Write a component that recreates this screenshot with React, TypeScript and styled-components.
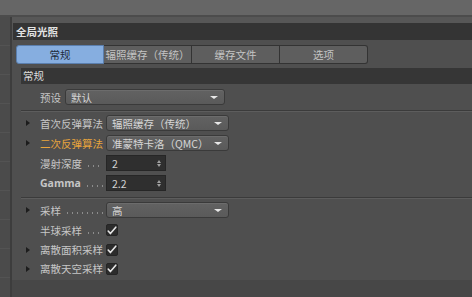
import styled, { createGlobalStyle } from "styled-components";

const GlobalStyle = createGlobalStyle`
  html, body {
    margin: 0;
    padding: 0;
    background: #4f4f4f;
    width: 472px;
    height: 297px;
    overflow: hidden;
  }
  * { box-sizing: border-box; }
`;

const Screen = styled.div`
  width: 472px;
  height: 297px;
  display: flex;
  flex-direction: column;
  font-family: "Noto Sans CJK SC", "Liberation Sans", sans-serif;
  font-size: 10.5px;
  color: #c9c9c9;
`;

const TopBar = styled.div`
  height: 17px;
  background: #666666;
  border-bottom: 2px solid #4c4c4c;
`;

const Body = styled.div`
  flex: 1;
  display: flex;
  min-height: 0;
`;

const SideStrip = styled.div`
  width: 12px;
  background: repeating-linear-gradient(
    to bottom,
    #4b4b4b 0px,
    #4b4b4b 28px,
    #535353 28px,
    #535353 29px
  );
  border-right: 2px solid #3d3d3d;
`;

const Main = styled.div`
  flex: 1;
  display: flex;
  flex-direction: column;
  background: #575757;
  padding-top: 6px;
`;

const TitleBar = styled.div`
  height: 17px;
  margin-left: 1px;
  background: #343434;
  color: #e2e2e2;
  font-weight: bold;
  line-height: 17px;
  padding-left: 3px;
`;

const Content = styled.div`
  flex: 1;
  display: flex;
  flex-direction: column;
  background: #4f4f4f;
`;

const Tabs = styled.div`
  display: flex;
  padding: 5px 0 0 4px;
  height: 28px;
`;

const Tab = styled.div<{ $active?: boolean }>`
  width: 88px;
  height: 19px;
  line-height: 18px;
  text-align: center;
  background: ${(p) => (p.$active ? "#86aee0" : "#5e5e5e")};
  color: ${(p) => (p.$active ? "#1e2a3a" : "#c4c4c4")};
  border: 1px solid ${(p) => (p.$active ? "#5b7fae" : "#333333")};
  border-left-width: ${(p) => (p.$active ? "1px" : "0")};
  &:first-child {
    border-radius: 3px 0 0 3px;
  }
  &:last-child {
    border-radius: 0 3px 3px 0;
  }
`;

const Panel = styled.div`
  margin-left: 9px;
  display: flex;
  flex-direction: column;
  height: 212px;
  background: #4f4f4f;
`;

const SectionHeader = styled.div`
  height: 16px;
  line-height: 16px;
  background: #363636;
  color: #dedede;
  padding-left: 2px;
`;

const Group = styled.div<{ $top: number; $bottom: number; $last?: boolean }>`
  padding-top: ${(p) => p.$top}px;
  padding-bottom: ${(p) => p.$bottom}px;
  border-bottom: ${(p) => (p.$last ? "none" : "1px solid #3b3b3b")};
  box-shadow: ${(p) => (p.$last ? "none" : "0 1px 0 #5d5d5d")};
  margin-bottom: ${(p) => (p.$last ? 0 : 1)}px;
`;

const Row = styled.div<{ $h?: number }>`
  height: ${(p) => p.$h ?? 20}px;
  display: flex;
  align-items: center;
`;

const Arrow = styled.div<{ $show?: boolean }>`
  width: 19px;
  padding-left: 5px;
  &::before {
    content: "";
    display: ${(p) => (p.$show ? "block" : "none")};
    width: 0;
    height: 0;
    border-top: 3px solid transparent;
    border-bottom: 3px solid transparent;
    border-left: 4px solid #1c1c1c;
  }
`;

const Label = styled.div<{ $w: number; $orange?: boolean; $bold?: boolean }>`
  width: ${(p) => p.$w}px;
  flex-shrink: 0;
  display: flex;
  align-items: center;
  white-space: nowrap;
  color: ${(p) => (p.$orange ? "#e9a53c" : "#c6c6c6")};
  font-weight: ${(p) => (p.$bold ? "bold" : "normal")};
  font-family: ${(p) =>
    p.$bold ? '"Open Sans", "Liberation Sans", sans-serif' : "inherit"};
  padding-right: 3px;
`;

// dotted leader drawn as a background, so no text gets clipped
const Dots = styled.span`
  flex: 1;
  height: 2px;
  margin: 5px 0 0 4px;
  background-image: radial-gradient(circle, #8c8c8c 0.8px, transparent 1px);
  background-size: 5px 2px;
  background-repeat: repeat-x;
`;

const Select = styled.div<{ $w: number }>`
  width: ${(p) => p.$w}px;
  height: 16px;
  border-radius: 3px;
  background: linear-gradient(#626262, #5a5a5a);
  border: 1px solid #3a3a3a;
  box-shadow: inset 0 1px 0 #6c6c6c;
  display: flex;
  align-items: center;
  justify-content: space-between;
  padding: 0 6px 0 5px;
  color: #d6d6d6;
  &::after {
    content: "";
    width: 0;
    height: 0;
    border-left: 4px solid transparent;
    border-right: 4px solid transparent;
    border-top: 3px solid #e8e8e8;
  }
`;

const Spin = styled.div`
  width: 60px;
  height: 16px;
  background: #2f2f2f;
  border: 1px solid #262626;
  display: flex;
  align-items: center;
  justify-content: space-between;
  padding: 0 4px 0 5px;
  color: #d2d2d2;
`;

const SpinArrows = styled.div`
  display: flex;
  flex-direction: column;
  gap: 1px;
  &::before,
  &::after {
    content: "";
    width: 0;
    height: 0;
    border-left: 2px solid transparent;
    border-right: 2px solid transparent;
  }
  &::before {
    border-bottom: 3px solid #a0a0a0;
  }
  &::after {
    border-top: 3px solid #a0a0a0;
  }
`;

const Check = styled.div`
  width: 12px;
  height: 12px;
  border-radius: 2px;
  background: #2c2c2c;
  border: 1px solid #252525;
  display: flex;
  align-items: center;
  justify-content: center;
`;

const Footer = styled.div`
  flex: 1;
  background: #474747;
`;

const CheckMark = () => (
  <svg width="10" height="9" viewBox="0 0 10 9">
    <path
      d="M1.2 5 L3.4 7.6 L8.8 1.2"
      fill="none"
      stroke="#e6e6e6"
      strokeWidth="1.6"
      strokeLinecap="round"
      strokeLinejoin="round"
    />
  </svg>
);

const tabs = ["常规", "辐照缓存（传统）", "缓存文件", "选项"];

export default function App() {
  return (
    <>
      <GlobalStyle />
      <Screen>
        <TopBar />
        <Body>
          <SideStrip />
          <Main>
            <TitleBar>全局光照</TitleBar>
            <Content>
              <Tabs>
                {tabs.map((t, i) => (
                  <Tab key={t} $active={i === 0}>
                    {t}
                  </Tab>
                ))}
              </Tabs>
              <Panel>
                <SectionHeader>常规</SectionHeader>
                <Group $top={3} $bottom={3}>
                  <Row>
                    <Arrow />
                    <Label $w={25}>预设</Label>
                    <Select $w={160}>默认</Select>
                  </Row>
                </Group>
                <Group $top={1} $bottom={4}>
                  <Row>
                    <Arrow $show />
                    <Label $w={66}>首次反弹算法</Label>
                    <Select $w={123}>辐照缓存（传统）</Select>
                  </Row>
                  <Row>
                    <Arrow $show />
                    <Label $w={66} $orange>
                      二次反弹算法
                    </Label>
                    <Select $w={123}>准蒙特卡洛（QMC）</Select>
                  </Row>
                  <Row>
                    <Arrow />
                    <Label $w={66}>
                      漫射深度
                      <Dots />
                    </Label>
                    <Spin>
                      2<SpinArrows />
                    </Spin>
                  </Row>
                  <Row>
                    <Arrow />
                    <Label $w={66} $bold>
                      Gamma
                      <Dots />
                    </Label>
                    <Spin>
                      2.2<SpinArrows />
                    </Spin>
                  </Row>
                </Group>
                <Group $top={1} $bottom={0} $last>
                  <Row>
                    <Arrow $show />
                    <Label $w={66}>
                      采样
                      <Dots />
                    </Label>
                    <Select $w={123}>高</Select>
                  </Row>
                  <Row>
                    <Arrow />
                    <Label $w={66}>
                      半球采样
                      <Dots />
                    </Label>
                    <Check>
                      <CheckMark />
                    </Check>
                  </Row>
                  <Row $h={19}>
                    <Arrow $show />
                    <Label $w={66}>离散面积采样</Label>
                    <Check>
                      <CheckMark />
                    </Check>
                  </Row>
                  <Row $h={19}>
                    <Arrow $show />
                    <Label $w={66}>离散天空采样</Label>
                    <Check>
                      <CheckMark />
                    </Check>
                  </Row>
                </Group>
              </Panel>
              <Footer />
            </Content>
          </Main>
        </Body>
      </Screen>
    </>
  );
}
